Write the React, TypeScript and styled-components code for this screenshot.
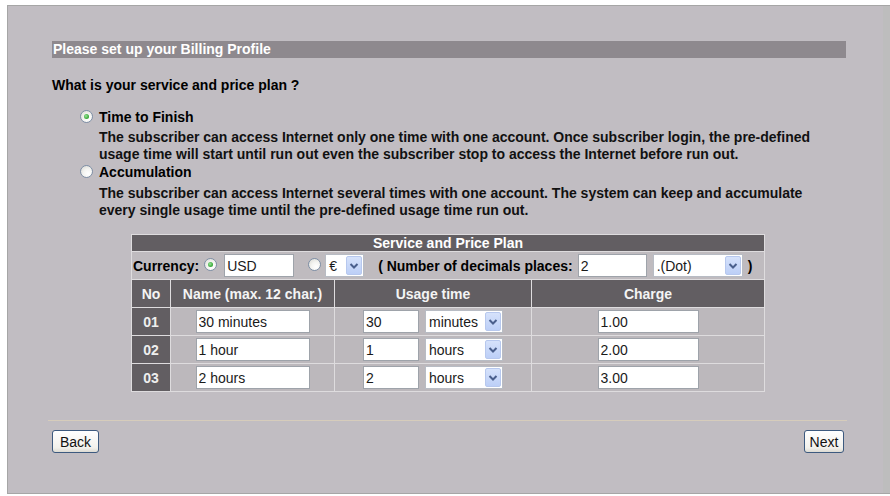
import React from "react";
import styled, { createGlobalStyle } from "styled-components";

const GlobalStyle = createGlobalStyle`
  html, body { margin: 0; padding: 0; background: #ffffff; }
  body {
    font-family: "Liberation Sans", Arial, sans-serif;
    font-size: 14px;
    color: #000;
  }
`;

const Frame = styled.div`
  margin: 5px 0 0 7px;
  height: 489px;
  box-sizing: border-box;
  border-top: 1px solid #a6a6a6;
  border-left: 1px solid #a6a6a6;
  border-bottom: 1px solid #a6a6a6;
  background: #bdbdbd;
  display: flex;
`;

const Panel = styled.div`
  width: 875px;
  background: #c1bdc2;
  box-sizing: border-box;
  padding: 35px 0 0 44px;
  display: flex;
  flex-direction: column;
`;

const HeaderBar = styled.div`
  width: 794px;
  height: 17px;
  line-height: 17px;
  background: #8e898e;
  color: #ffffff;
  font-weight: bold;
  padding-left: 1px;
  box-sizing: border-box;
`;

const Question = styled.div`
  margin-top: 19px;
  line-height: 17px;
  font-weight: bold;
`;

const Options = styled.div`
  margin-left: 28px;
  margin-top: 14px;
  display: flex;
  flex-direction: column;
`;

const OptionLine = styled.div`
  display: flex;
  align-items: center;
  height: 17px;
  font-weight: bold;
  gap: 6px;
`;

const Desc = styled.div<{ $mt: number }>`
  margin-left: 19px;
  margin-top: ${(p) => p.$mt}px;
  line-height: 17px;
  font-weight: bold;
  color: #111;
`;

const RadioDot = styled.span<{ $checked?: boolean }>`
  position: relative;
  display: inline-block;
  flex: none;
  width: 13px;
  height: 13px;
  box-sizing: border-box;
  border-radius: 50%;
  border: 1px solid #7e8fa6;
  background: radial-gradient(circle at 65% 70%, #ffffff 0%, #f4f4f1 45%, #d6d6d0 100%);
  &::after {
    content: "";
    display: ${(p) => (p.$checked ? "block" : "none")};
    position: absolute;
    left: 3px;
    top: 3px;
    width: 5px;
    height: 5px;
    border-radius: 50%;
    background: radial-gradient(circle at 40% 40%, #9be39b 0%, #3fae3f 60%, #238a23 100%);
  }
`;

const Grid = styled.div`
  margin-top: 15px;
  margin-left: 79px;
  width: 634px;
  box-sizing: border-box;
  display: grid;
  grid-template-columns: 38px 163px 196px 232px;
  grid-template-rows: 16px 27px 27px 27px 27px 27px;
  gap: 1px;
  padding: 1px;
  background: #dedcde;
`;

const TitleCell = styled.div`
  grid-column: 1 / -1;
  background: #625e62;
  color: #ffffff;
  font-weight: bold;
  text-align: center;
  line-height: 16px;
`;

const CurrencyRow = styled.div`
  grid-column: 1 / -1;
  background: #bfbbbf;
  display: flex;
  align-items: center;
  padding-left: 1px;
  font-weight: bold;
`;

const HeadCell = styled.div`
  background: #625e62;
  color: #f4f4f4;
  font-weight: bold;
  display: flex;
  align-items: center;
  justify-content: center;
`;

const NoCell = styled(HeadCell)`
  color: #eeeeee;
`;

const DataCell = styled.div`
  background: #bcb8bc;
  display: flex;
  align-items: center;
  justify-content: center;
  gap: 6px;
`;

const Field = styled.input<{ $w: number; $ml?: number }>`
  width: ${(p) => p.$w}px;
  height: 23px;
  margin-left: ${(p) => p.$ml ?? 0}px;
  box-sizing: border-box;
  border: 1px solid #9ea3aa;
  background: #ffffff;
  padding: 0 0 0 2px;
  font-family: "Liberation Sans", Arial, sans-serif;
  font-size: 14px;
  font-weight: normal;
  color: #1a1a1a;
  outline: none;
`;

const SelectBox = styled.div<{ $w: number; $ml?: number }>`
  width: ${(p) => p.$w}px;
  height: 23px;
  margin-left: ${(p) => p.$ml ?? 0}px;
  box-sizing: border-box;
  border: 1px solid #b8bcc4;
  background: #ffffff;
  display: flex;
  align-items: center;
  padding: 1px;
  font-weight: normal;
  color: #1a1a1a;
`;

const SelectValue = styled.span`
  flex: 1;
  padding-left: 2px;
  white-space: nowrap;
  overflow: hidden;
`;

const DropBtn = styled.span`
  flex: none;
  width: 16px;
  height: 19px;
  box-sizing: border-box;
  border: 1px solid #b7c8ee;
  border-radius: 2px;
  background: linear-gradient(#d6e2fb, #bccff7);
  display: flex;
  align-items: center;
  justify-content: center;
`;

const Inline = styled.span<{ $ml: number }>`
  margin-left: ${(p) => p.$ml}px;
  white-space: nowrap;
`;

const Separator = styled.div`
  margin-top: 28px;
  margin-left: -4px;
  width: 799px;
  height: 1px;
  background: #d6ccbb;
`;

const ButtonRow = styled.div`
  margin-top: 9px;
  width: 792px;
  display: flex;
  justify-content: space-between;
`;

const XpButton = styled.button<{ $w: number }>`
  width: ${(p) => p.$w}px;
  height: 23px;
  padding: 0;
  box-sizing: border-box;
  border: 1px solid #3d5a7f;
  border-radius: 3px;
  background: linear-gradient(#ffffff, #f2f1ec 80%, #dcdad2);
  font-family: "Liberation Sans", Arial, sans-serif;
  font-size: 14px;
  color: #111;
`;

const Chevron = () => (
  <svg width="10" height="8" viewBox="0 0 10 8">
    <path d="M1.5 2 L5 5.5 L8.5 2" fill="none" stroke="#4a5f8c" strokeWidth="2" />
  </svg>
);

const Select = ({ value, w, ml }: { value: string; w: number; ml?: number }) => (
  <SelectBox $w={w} $ml={ml}>
    <SelectValue>{value}</SelectValue>
    <DropBtn>
      <Chevron />
    </DropBtn>
  </SelectBox>
);

const rows = [
  { no: "01", name: "30 minutes", amount: "30", unit: "minutes", charge: "1.00" },
  { no: "02", name: "1 hour", amount: "1", unit: "hours", charge: "2.00" },
  { no: "03", name: "2 hours", amount: "2", unit: "hours", charge: "3.00" },
];

export default function App() {
  return (
    <>
      <GlobalStyle />
      <Frame>
        <Panel>
          <HeaderBar>Please set up your Billing Profile</HeaderBar>
          <Question>What is your service and price plan ?</Question>
          <Options>
            <OptionLine>
              <RadioDot $checked />
              <span>Time to Finish</span>
            </OptionLine>
            <Desc $mt={4}>
              The subscriber can access Internet only one time with one account. Once subscriber login, the pre-defined
              <br />
              usage time will start until run out even the subscriber stop to access the Internet before run out.
            </Desc>
            <OptionLine>
              <RadioDot />
              <span>Accumulation</span>
            </OptionLine>
            <Desc $mt={5}>
              The subscriber can access Internet several times with one account. The system can keep and accumulate
              <br />
              every single usage time until the pre-defined usage time run out.
            </Desc>
          </Options>

          <Grid>
            <TitleCell>Service and Price Plan</TitleCell>
            <CurrencyRow>
              <span>Currency:</span>
              <Inline $ml={5}>
                <RadioDot $checked />
              </Inline>
              <Field $w={70} $ml={7} defaultValue="USD" />
              <Inline $ml={14}>
                <RadioDot />
              </Inline>
              <Select value="€" w={39} ml={4} />
              <Inline $ml={14}>( Number of decimals places:</Inline>
              <Field $w={69} $ml={5} defaultValue="2" />
              <Select value=".(Dot)" w={90} ml={6} />
              <Inline $ml={5}>)</Inline>
            </CurrencyRow>
            <HeadCell>No</HeadCell>
            <HeadCell>Name (max. 12 char.)</HeadCell>
            <HeadCell>Usage time</HeadCell>
            <HeadCell>Charge</HeadCell>
            {rows.map((r) => (
              <React.Fragment key={r.no}>
                <NoCell>{r.no}</NoCell>
                <DataCell>
                  <Field $w={114} defaultValue={r.name} />
                </DataCell>
                <DataCell>
                  <Field $w={56} defaultValue={r.amount} />
                  <Select value={r.unit} w={78} />
                </DataCell>
                <DataCell>
                  <Field $w={101} defaultValue={r.charge} />
                </DataCell>
              </React.Fragment>
            ))}
          </Grid>

          <Separator />
          <ButtonRow>
            <XpButton $w={47}>Back</XpButton>
            <XpButton $w={40}>Next</XpButton>
          </ButtonRow>
        </Panel>
      </Frame>
    </>
  );
}
